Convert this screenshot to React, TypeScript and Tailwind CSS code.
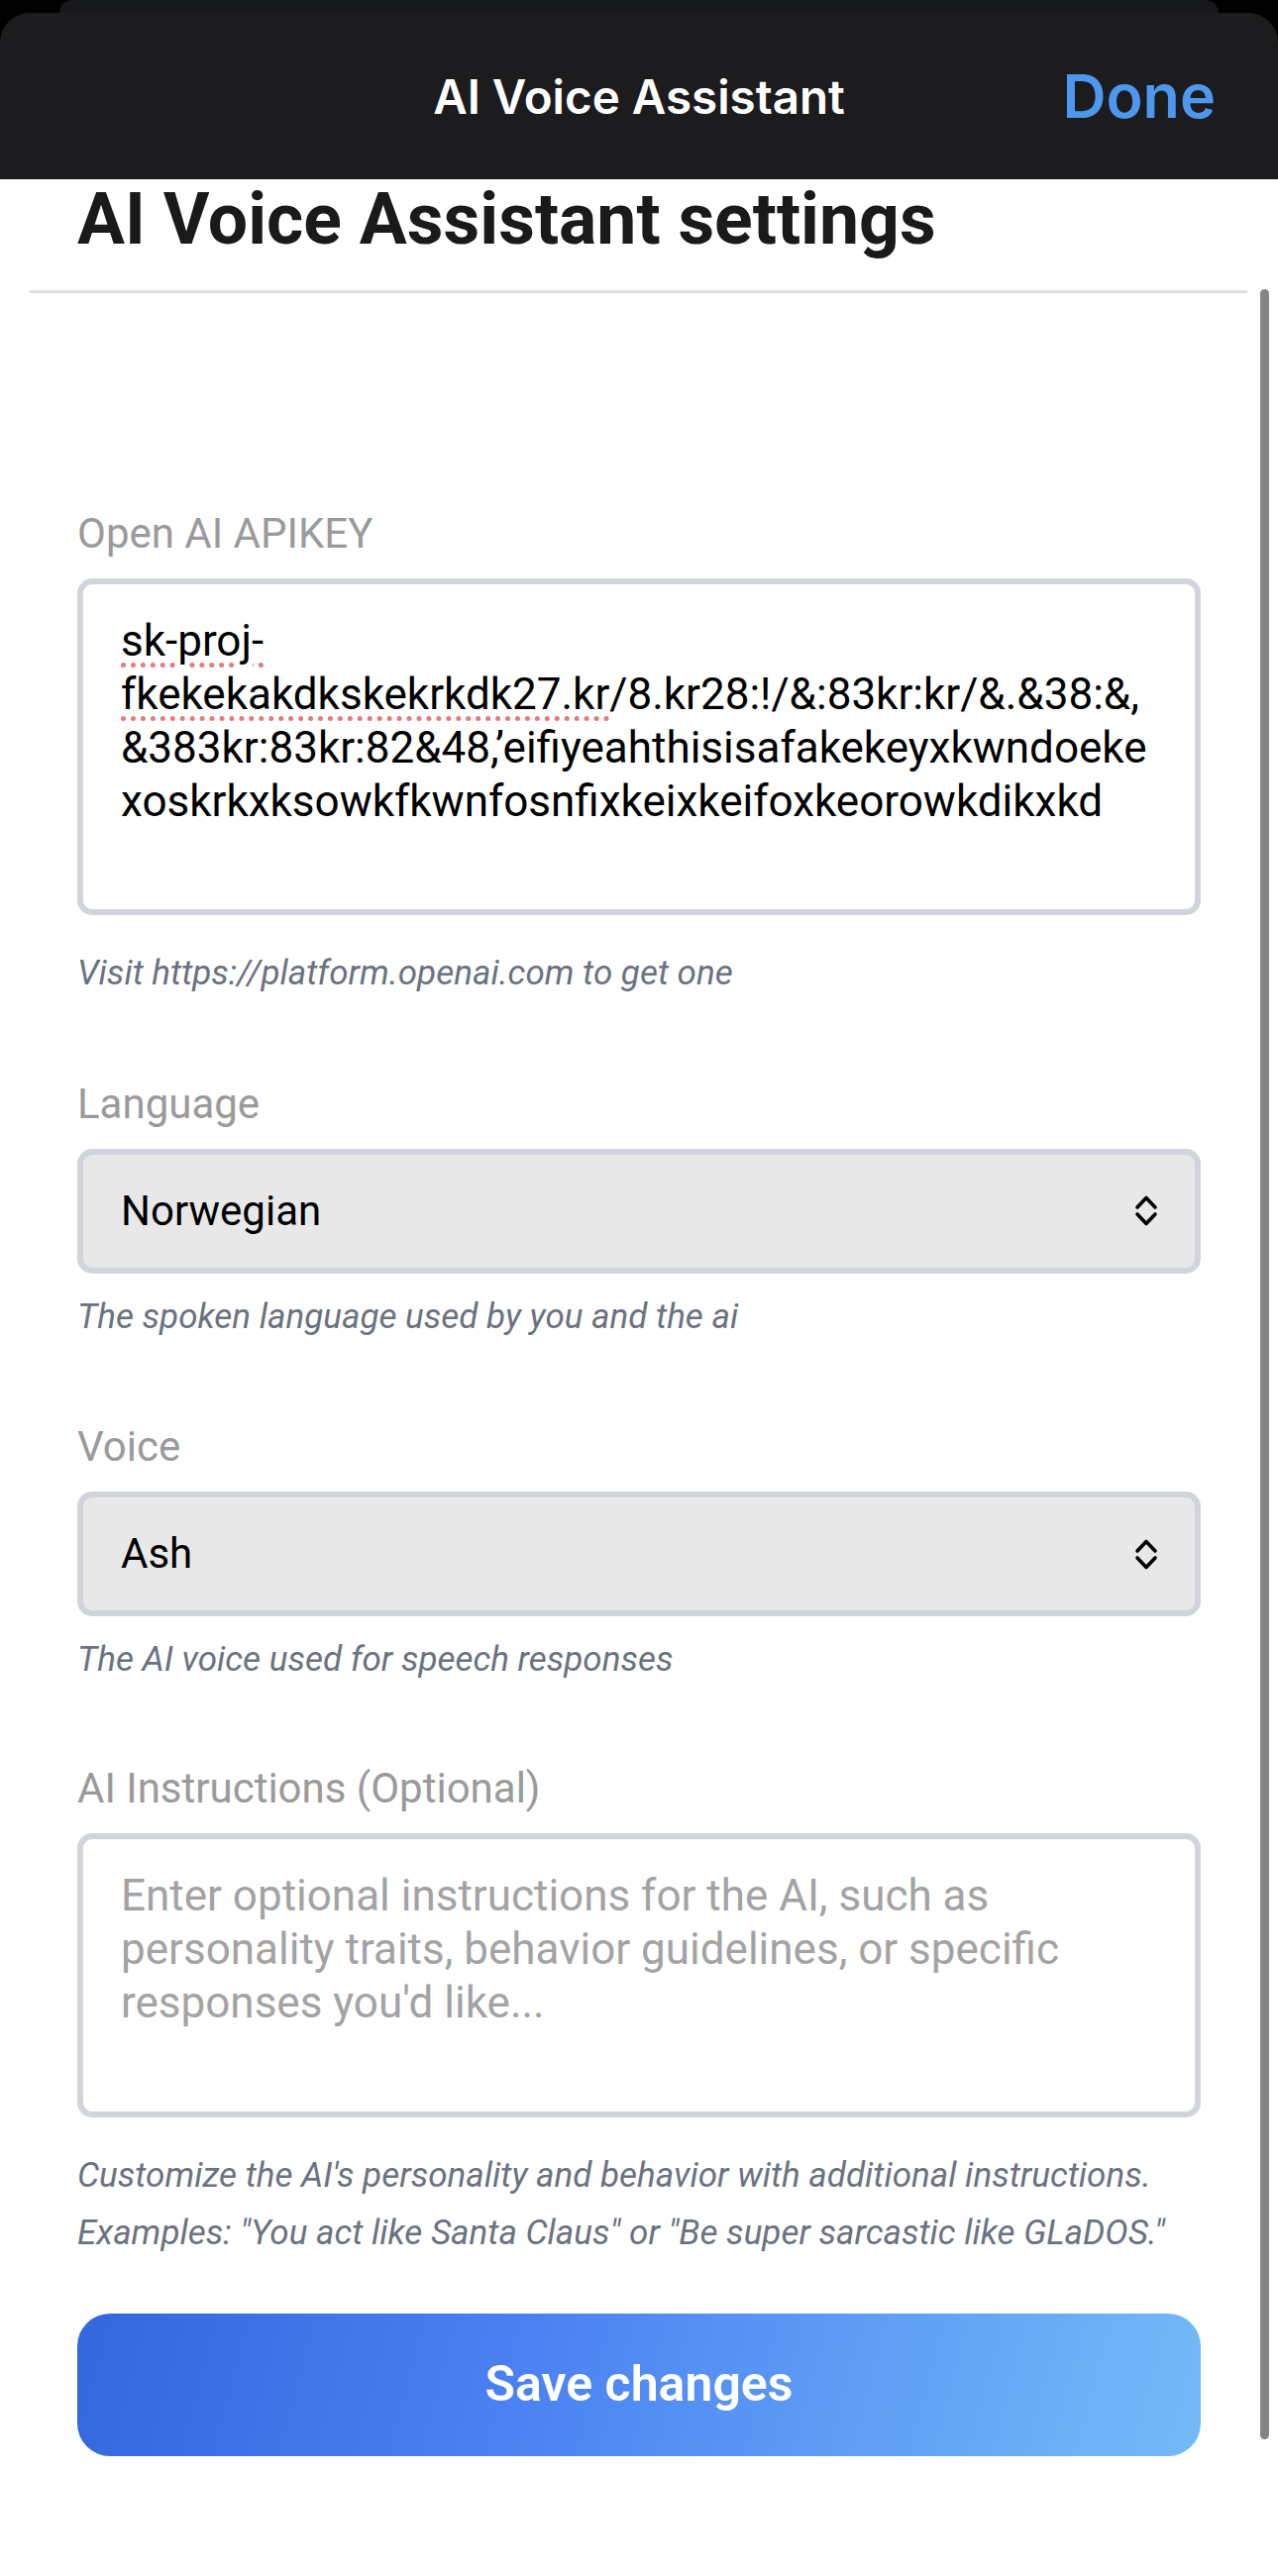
import type { FC, ReactNode } from "react";

const body = "font-['Roboto','Liberation_Sans',sans-serif]";

const Label: FC<{ children: ReactNode }> = ({ children }) => (
	<div className="mb-[15px] text-[42px] leading-[60px] text-[#9a9a9a]">
		{children}
	</div>
);

const Hint: FC<{ children: ReactNode; className?: string }> = ({
	children,
	className,
}) => (
	<p
		className={`m-0 text-[35px] italic leading-[58.5px] text-[#6b7280] ${className ?? ""}`}
	>
		{children}
	</p>
);

const Chevrons: FC = () => (
	<svg
		width="24"
		height="33"
		viewBox="0 0 24 33"
		fill="none"
		stroke="#000"
		strokeWidth="3.6"
		strokeLinecap="round"
		strokeLinejoin="round"
	>
		<polyline points="3,13 12,3.5 21,13" />
		<polyline points="3,20 12,29.5 21,20" />
	</svg>
);

const Select: FC<{ value: string }> = ({ value }) => (
	<div className="flex items-center justify-between rounded-[15px] border-[6px] border-[#d1d5db] bg-[#e8e8e8] py-[30px] pl-[38px] pr-[37px]">
		<span className="text-[42px] leading-[54px] text-black">{value}</span>
		<Chevrons />
	</div>
);

const spell =
	"underline decoration-dotted decoration-[#e57b7b] decoration-[5px] underline-offset-[7px]";

export default function App() {
	return (
		<div className={`relative h-[2601px] w-[1290px] overflow-hidden bg-black ${body}`}>
			{/* sheet stacked behind */}
			<div className="mx-[60px] h-[13px] rounded-t-[20px] bg-[#17181b]" />

			{/* front sheet header */}
			<div className="grid h-[168px] grid-cols-[1fr_auto_1fr] items-center rounded-t-[30px] bg-[#1c1c1e] font-['Inter',sans-serif]">
				<div />
				<div className="pt-[2px] text-[47.5px] font-semibold text-white">
					AI Voice Assistant
				</div>
				<div className="justify-self-end pr-[63px] pt-[2px] text-[61px] font-semibold text-[#4e97ee]">
					Done
				</div>
			</div>

			{/* content */}
			<div className="h-full bg-white px-[30px] pr-[31px]">
				<h1 className="m-0 pl-[48px] pt-[5px] text-[71.5px] font-bold leading-[72px] text-[#1a1a1a]">
					AI Voice Assistant settings
				</h1>
				<div className="mt-[35px] h-[3px] bg-[#dedede]" />

				<div className="px-[47px] pl-[48px] pt-[213px]">
					<Label>Open AI APIKEY</Label>
					<div className="h-[340px] rounded-[15px] border-[6px] border-[#d1d5db] bg-white px-[38px] pt-[30px] text-[44px] leading-[54px] text-black">
						<div>
							<span className={spell}>sk-proj-</span>
						</div>
						<div>
							<span className={spell}>fkekekakdkskekrkdk27.kr</span>
							/8.kr28:!/&amp;:83kr:kr/&amp;.&amp;38:&amp;,
						</div>
						<div>&amp;383kr:83kr:82&amp;48,’eifiyeahthisisafakekeyxkwndoeke</div>
						<div>xoskrkxksowkfkwnfosnfixkeixkeifoxkeorowkdikxkd</div>
					</div>
					<Hint className="mt-[30px]">
						Visit https://platform.openai.com to get one
					</Hint>

					<div className="mt-[72px]">
						<Label>Language</Label>
						<Select value="Norwegian" />
						<Hint className="mt-[15px]">
							The spoken language used by you and the ai
						</Hint>
					</div>

					<div className="mt-[72px]">
						<Label>Voice</Label>
						<Select value="Ash" />
						<Hint className="mt-[15px]">The AI voice used for speech responses</Hint>
					</div>

					<div className="mt-[70px]">
						<Label>AI Instructions (Optional)</Label>
						<div className="h-[287px] rounded-[15px] border-[6px] border-[#d1d5db] bg-white px-[38px] pt-[30px] text-[44px] leading-[54px] text-[#a3a3a3]">
							<div>Enter optional instructions for the AI, such as</div>
							<div>personality traits, behavior guidelines, or specific</div>
							<div>responses you'd like...</div>
						</div>
						<Hint className="mt-[30px]">
							Customize the AI's personality and behavior with additional
							instructions.
							<br />
							Examples: "You act like Santa Claus" or "Be super sarcastic like
							GLaDOS."
						</Hint>
					</div>

					<button
						type="button"
						className="mt-[51px] flex h-[144px] w-full items-center justify-center rounded-[33px] bg-[linear-gradient(105deg,#3466dc_0%,#4a80f2_38%,#5c9af4_65%,#74bbf8_100%)] text-[50px] font-semibold text-white"
					>
						Save changes
					</button>
				</div>
			</div>

			{/* scroll indicator */}
			<div className="absolute left-[1272px] top-[292px] h-[2171px] w-[9px] rounded-full bg-[#858585]" />
		</div>
	);
}
